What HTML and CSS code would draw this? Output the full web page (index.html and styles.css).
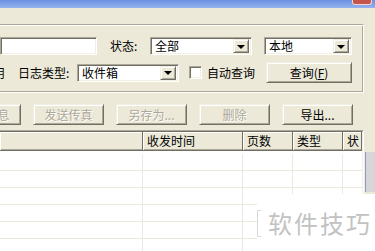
FILE: index.html
```html
<!DOCTYPE html>
<html lang="zh-CN">
<head>
    <meta charset="UTF-8">
    <title>传真日志</title>
    <link rel="stylesheet" href="styles.css">
</head>
<body>
    <div class="titlebar"><span class="close-btn"></span></div>
    <div class="dialog">
        <div class="group">
            <div class="row row-top">
                <div class="field text-field"></div>
                <span class="label label-status">状态:</span>
                <div class="field combo combo-status">全部<span class="drop"><i></i></span></div>
                <div class="field combo combo-place">本地<span class="drop"><i></i></span></div>
            </div>
            <div class="row row-bottom">
                <span class="cut">用</span>
                <span class="label label-type">日志类型:</span>
                <div class="field combo combo-type">收件箱<span class="drop"><i></i></span></div>
                <label class="check"><span class="field box"></span>自动查询</label>
                <button class="btn btn-query">查询(<u>F</u>)</button>
            </div>
        </div>

        <div class="actions">
            <button class="btn btn-cut" disabled>查看信息</button>
            <button class="btn" disabled>发送传真</button>
            <button class="btn" disabled>另存为...</button>
            <button class="btn" disabled>删除</button>
            <button class="btn">导出...</button>
        </div>

        <div class="lower">
            <div class="list">
                <div class="list-inner">
                    <div class="list-head">
                        <div class="col c1"></div>
                        <div class="col c2">收发时间</div>
                        <div class="col c3">页数</div>
                        <div class="col c4">类型</div>
                        <div class="col c5">状</div>
                    </div>
                    <div class="list-body">
                        <div class="list-row"><span class="c1"></span><span class="c2"></span><span class="c3"></span><span class="c4"></span><span class="c5"></span></div>
                        <div class="list-row"><span class="c1"></span><span class="c2"></span><span class="c3"></span><span class="c4"></span><span class="c5"></span></div>
                        <div class="list-row"><span class="c1"></span><span class="c2"></span><span class="c3"></span><span class="c4"></span><span class="c5"></span></div>
                        <div class="list-row"><span class="c1"></span><span class="c2"></span><span class="c3"></span><span class="c4"></span><span class="c5"></span></div>
                        <div class="list-row"><span class="c1"></span><span class="c2"></span><span class="c3"></span><span class="c4"></span><span class="c5"></span></div>
                        <div class="list-row"><span class="c1"></span><span class="c2"></span><span class="c3"></span><span class="c4"></span><span class="c5"></span></div>
                    </div>
                </div>
            </div>
            <div class="side"><div class="side-block"></div></div>
        </div>
    </div>

    <div class="watermark"><span class="bracket"></span><span class="mark-text">软件技巧</span></div>
</body>
</html>
```

FILE: styles.css
```css
*{
    margin: 0;
    padding: 0;
    box-sizing: border-box;
}
body{
    width: 375px;
    height: 251px;
    overflow: hidden;
    position: relative;
    background-color: #ece9d8;
    font-family: "Noto Sans CJK SC", "Liberation Sans", sans-serif;
    font-size: 12px;
    color: #000;
}
.titlebar{
    height: 8px;
    background: linear-gradient(#6a8fe0, #93b2ef);
    display: flex;
    justify-content: flex-end;
    padding-right: 3px;
}
.close-btn{
    width: 20px;
    height: 5px;
    background-color: #c4554d;
    border: 1px solid #f3d6d0;
    border-top: none;
    border-radius: 0 0 3px 3px;
}
.dialog{
    padding-top: 16px;
}

/* etched group box */
.group{
    width: 364px;
    border-top: 1px solid #aca899;
    border-right: 1px solid #fff;
    border-bottom: 1px solid #fff;
    box-shadow: inset 0 1px 0 #fff, inset -1px -1px 0 #aca899;
    padding: 12px 0 9px 0;
}
.row{
    display: flex;
    align-items: center;
}
.row-top{
    height: 18px;
}
.row-bottom{
    height: 21px;
    margin-top: 7px;
}
.field{
    background-color: #fff;
    border: 1px solid;
    border-color: #aca899 #fff #fff #aca899;
    box-shadow: inset 1px 1px 0 #716f64, inset -1px -1px 0 #f1efe2;
}
.text-field{
    width: 97px;
    height: 18px;
}
.label{
    white-space: nowrap;
    line-height: 18px;
}
.label-status{
    width: 40px;
    margin-left: 13px;
}
.combo{
    height: 18px;
    display: flex;
    align-items: center;
    justify-content: space-between;
    padding: 2px 2px 2px 4px;
    line-height: 14px;
}
.combo-status{
    width: 102px;
}
.combo-place{
    width: 88px;
    margin-left: 12px;
}
.combo-type{
    width: 102px;
}
.drop{
    width: 16px;
    height: 14px;
    background-color: #ece9d8;
    border: 1px solid;
    border-color: #f1efe2 #716f64 #716f64 #f1efe2;
    box-shadow: inset 1px 1px 0 #fff, inset -1px -1px 0 #aca899;
    display: flex;
    justify-content: center;
    align-items: center;
}
.drop i{
    width: 0;
    height: 0;
    border-left: 4px solid transparent;
    border-right: 4px solid transparent;
    border-top: 4px solid #000;
    margin-top: 1px;
}
.cut{
    width: 5px;
    overflow: hidden;
    display: flex;
    justify-content: flex-end;
    white-space: nowrap;
}
.label-type{
    width: 59px;
    margin-left: 13px;
}
.check{
    width: 77px;
    margin-left: 10px;
    display: flex;
    align-items: center;
    white-space: nowrap;
}
.box{
    width: 13px;
    height: 13px;
    margin-right: 5px;
}
.btn{
    height: 21px;
    background-color: #ece9d8;
    border: 1px solid;
    border-color: #f1efe2 #716f64 #716f64 #f1efe2;
    box-shadow: inset 1px 1px 0 #fff, inset -1px -1px 0 #aca899;
    font-family: inherit;
    font-size: 12px;
    color: #000;
    white-space: nowrap;
    overflow: hidden;
}
.btn:disabled{
    color: #aca899;
    text-shadow: 1px 1px 0 #fff;
}
.btn u{
    text-underline-offset: 1px;
}
.btn-query{
    width: 86px;
}
.actions{
    display: flex;
    gap: 12px;
    margin-top: 11px;
}
.actions .btn{
    width: 71px;
}
.actions .btn-cut{
    margin-left: -50px;
}

/* list view */
.lower{
    display: flex;
    margin-top: 5px;
}
.list{
    width: 364px;
    height: 125px;
    background-color: #fff;
    border-top: 1px solid #aca899;
    border-right: 1px solid #fff;
}
.list-inner{
    height: 100%;
    border-top: 1px solid #716f64;
    border-right: 1px solid #f1efe2;
}
.list-head{
    display: flex;
    height: 19px;
    background-color: #ece9d8;
    border-bottom: 1px solid #716f64;
}
.col{
    height: 18px;
    line-height: 17px;
    padding-left: 4px;
    white-space: nowrap;
    overflow: hidden;
    border-right: 1px solid #716f64;
    box-shadow: inset 1px 1px 0 #fff, inset 0 -1px 0 #aca899;
}
.c1{ width: 143px; }
.c2{ width: 100px; }
.c3{ width: 50px; }
.c4{ width: 50px; }
.c5{ width: 19px; }
.list-body{
    padding-top: 3px;
}
.list-row{
    display: flex;
    height: 17px;
    border-bottom: 1px solid #ebe9dc;
}
.list-row span{
    border-right: 1px solid #ebe9dc;
}
.list-row .c5{
    border-right: none;
}
.side{
    flex: 1;
}
.side-block{
    margin-top: 22px;
    margin-left: 1px;
    height: 40px;
    background-color: #d6d5d8;
    border-left: 1px solid #8d9cc4;
}

/* watermark overlay */
.watermark{
    position: absolute;
    left: 257px;
    top: 194px;
    right: 0;
    bottom: 0;
    background-color: rgba(255, 255, 255, 0.96);
    display: flex;
    align-items: flex-start;
    padding-top: 15px;
}
.bracket{
    width: 4px;
    height: 27px;
    margin-top: 1px;
    border: 1px solid #d9d9d9;
    border-right: none;
}
.mark-text{
    margin-left: 7px;
    font-size: 24px;
    line-height: 28px;
    letter-spacing: 2px;
    color: #c2c2c2;
    white-space: nowrap;
}
```
